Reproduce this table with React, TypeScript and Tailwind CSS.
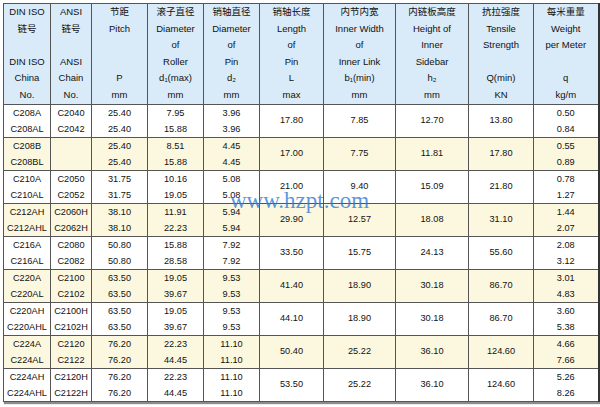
import * as React from "react"

const widths = [47, 41, 56, 56, 56, 64, 72, 73, 65, 65]

const header: string[][] = [
  ["DIN ISO", "链号", "", "DIN ISO", "China", "No."],
  ["ANSI", "链号", "", "ANSI", "Chain", "No."],
  ["节距", "Pitch", "", "", "P", "mm"],
  ["滚子直径", "Diameter", "of", "Roller", "d₁(max)", "mm"],
  ["销轴直径", "Diameter", "of", "Pin", "d₂", "mm"],
  ["销轴长度", "Length", "of", "Pin", "L", "max"],
  ["内节内宽", "Inner Width", "of", "Inner Link", "b₁(min)", "mm"],
  ["内链板高度", "Height of", "Inner", "Sidebar", "h₂", "mm"],
  ["抗拉强度", "Tensile", "Strength", "", "Q(min)", "KN"],
  ["每米重量", "Weight", "per Meter", "", "q", "kg/m"],
]

// each pair: [din, ansi, pitch, roller, pin] x2, then length, inner width, height, tensile, weight x2
const rows = [
  { a: ["C208A", "C2040", "25.40", "7.95", "3.96"], b: ["C208AL", "C2042", "25.40", "15.88", "3.96"], m: ["17.80", "7.85", "12.70", "13.80"], w: ["0.50", "0.84"] },
  { a: ["C208B", "", "25.40", "8.51", "4.45"], b: ["C208BL", "", "25.40", "15.88", "4.45"], m: ["17.00", "7.75", "11.81", "17.80"], w: ["0.55", "0.89"] },
  { a: ["C210A", "C2050", "31.75", "10.16", "5.08"], b: ["C210AL", "C2052", "31.75", "19.05", "5.08"], m: ["21.00", "9.40", "15.09", "21.80"], w: ["0.78", "1.27"] },
  { a: ["C212AH", "C2060H", "38.10", "11.91", "5.94"], b: ["C212AHL", "C2062H", "38.10", "22.23", "5.94"], m: ["29.90", "12.57", "18.08", "31.10"], w: ["1.44", "2.07"] },
  { a: ["C216A", "C2080", "50.80", "15.88", "7.92"], b: ["C216AL", "C2082", "50.80", "28.58", "7.92"], m: ["33.50", "15.75", "24.13", "55.60"], w: ["2.08", "3.12"] },
  { a: ["C220A", "C2100", "63.50", "19.05", "9.53"], b: ["C220AL", "C2102", "63.50", "39.67", "9.53"], m: ["41.40", "18.90", "30.18", "86.70"], w: ["3.01", "4.83"] },
  { a: ["C220AH", "C2100H", "63.50", "19.05", "9.53"], b: ["C220AHL", "C2102H", "63.50", "39.67", "9.53"], m: ["44.10", "18.90", "30.18", "86.70"], w: ["3.60", "5.38"] },
  { a: ["C224A", "C2120", "76.20", "22.23", "11.10"], b: ["C224AL", "C2122", "76.20", "44.45", "11.10"], m: ["50.40", "25.22", "36.10", "124.60"], w: ["4.66", "7.66"] },
  { a: ["C224AH", "C2120H", "76.20", "22.23", "11.10"], b: ["C224AHL", "C2122H", "76.20", "44.45", "11.10"], m: ["53.50", "25.22", "36.10", "124.60"], w: ["5.26", "8.26"] },
]

const cell = "border border-[#555] p-0 text-center align-middle"

export default function App() {
  return (
    <div className="relative w-[600px] h-[407px] bg-white pl-[3px] pt-[3px] font-['Liberation_Sans','Noto_Sans_CJK_SC',sans-serif] text-[#111]">
      <table className="table-fixed border-collapse w-[595px] border-l border-t border-[#333] shadow-[1px_2px_1px_rgba(0,0,0,0.45)]">
        <colgroup>
          {widths.map((w, i) => (
            <col key={i} style={{ width: w }} />
          ))}
        </colgroup>
        <thead>
          <tr className="bg-[#d9ebf8]">
            {header.map((lines, i) => (
              <th key={i} className={`${cell} font-normal text-[9.5px] leading-[16.6px] ${i === 9 ? "border-r-2 border-r-[#333]" : ""}`}>
                {lines.map((l, j) => (
                  <div key={j} className="h-[16.6px] whitespace-nowrap">{l}</div>
                ))}
              </th>
            ))}
          </tr>
        </thead>
        <tbody className="text-[9.2px]">
          {rows.map((r, i) => (
            <tr key={i} className={i % 2 === 1 ? "bg-[#fcf8df]" : "bg-white"}>
              {r.a.map((v, j) => (
                <td key={j} className={cell}>
                  <div className="h-[16px] leading-[16px] whitespace-nowrap">{v}</div>
                  <div className="h-[16px] leading-[16px] whitespace-nowrap">{r.b[j]}</div>
                </td>
              ))}
              {r.m.map((v, j) => (
                <td key={"m" + j} className={cell}>
                  {v}
                </td>
              ))}
              <td className={`${cell} border-r-2 border-r-[#333]`}>
                <div className="h-[16px] leading-[16px]">{r.w[0]}</div>
                <div className="h-[16px] leading-[16px]">{r.w[1]}</div>
              </td>
            </tr>
          ))}
        </tbody>
      </table>
      <div className="absolute left-[230px] top-[189px] text-[23px] leading-none font-['Liberation_Serif',serif] text-[#2d7ad6]/80 pointer-events-none">
        www.hzpt.com
      </div>
    </div>
  )
}
